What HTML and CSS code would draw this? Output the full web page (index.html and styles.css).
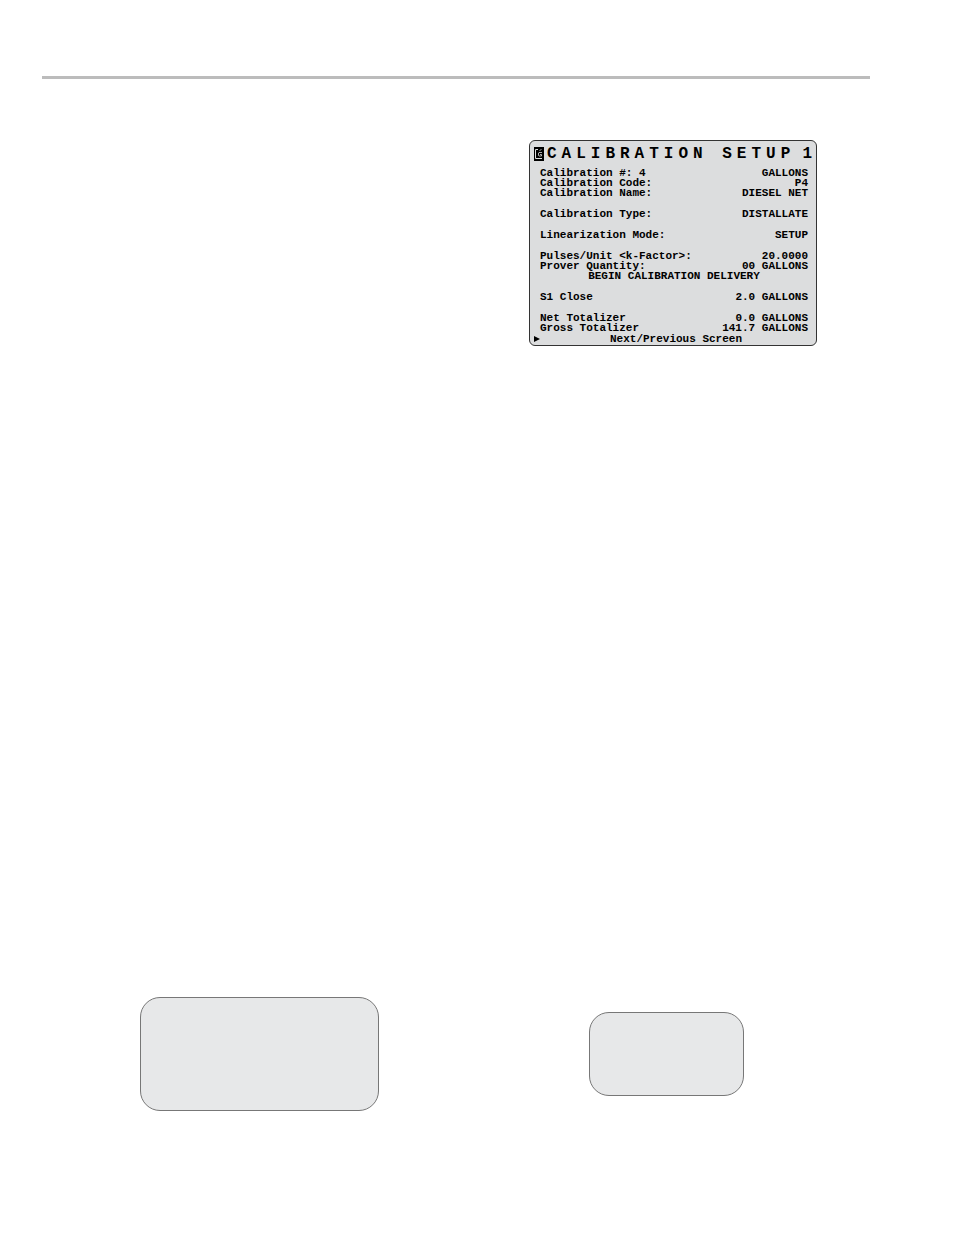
FILE: index.html
```html
<!DOCTYPE html>
<html lang="en">
<head>
    <meta charset="UTF-8">
    <meta name="viewport" content="width=device-width, initial-scale=1.0">
    <title>Calibration Setup</title>
    <link rel="stylesheet" href="styles.css">
</head>
<body>

    <header class="page-header"></header>

    <main class="page-content">
        <section class="screen">
            <div class="screen-header">
                <svg class="screen-icon" width="10" height="14" viewBox="0 0 10 14" aria-hidden="true">
                    <rect width="10" height="14" fill="#000"/>
                    <path d="M4 2.5H1.5V11.5H8" fill="none" stroke="#ddd" stroke-width="1"/>
                    <path d="M8 5.5H5L4.5 6V8.5L5 9H7.5V7.5H6M5.5 4L7.5 2" fill="none" stroke="#ddd" stroke-width="0.8"/>
                </svg>
                <h1 class="screen-title">CALIBRATION SETUP</h1>
                <span class="screen-number">1</span>
            </div>

            <div class="screen-body">
                <dl>
                    <div class="row"><dt>Calibration #: 4</dt><dd>GALLONS</dd></div>
                    <div class="row"><dt>Calibration Code:</dt><dd>P4</dd></div>
                    <div class="row"><dt>Calibration Name:</dt><dd>DIESEL NET</dd></div>
                </dl>
                <dl>
                    <div class="row"><dt>Calibration Type:</dt><dd>DISTALLATE</dd></div>
                </dl>
                <dl>
                    <div class="row"><dt>Linearization Mode:</dt><dd>SETUP</dd></div>
                </dl>
                <div>
                    <dl>
                        <div class="row"><dt>Pulses/Unit &lt;k-Factor&gt;:</dt><dd>20.0000</dd></div>
                        <div class="row"><dt>Prover Quantity:</dt><dd>00 GALLONS</dd></div>
                    </dl>
                    <p class="center-line">BEGIN CALIBRATION DELIVERY</p>
                </div>
                <dl>
                    <div class="row"><dt>S1 Close</dt><dd>2.0 GALLONS</dd></div>
                </dl>
                <dl>
                    <div class="row"><dt>Net Totalizer</dt><dd>0.0 GALLONS</dd></div>
                    <div class="row"><dt>Gross Totalizer</dt><dd>141.7 GALLONS</dd></div>
                </dl>
            </div>

            <div class="screen-footer">
                <svg class="arrow" width="6" height="6" viewBox="0 0 6 6" aria-hidden="true">
                    <path d="M0 0L6 3L0 6Z"/>
                </svg>
                <p class="footer-text">Next/Previous Screen</p>
            </div>
        </section>

        <section class="panels">
            <div class="panel panel-large"></div>
            <div class="panel panel-small"></div>
        </section>
    </main>

</body>
</html>
```
FILE: styles.css
```css
* {
    box-sizing: border-box;
}

body {
    margin: 0;
    padding: 76px 84px 80px 42px;
    background-color: #fff;
    color: #000;
    font-family: "Liberation Mono", "Courier New", monospace;
}

h1, p, dl, dd {
    margin: 0;
}

.page-header {
    height: 3px;
    background-color: #bcbcbc;
}

.page-content {
    display: flex;
    flex-direction: column;
    padding: 61px 0 0 14px;
}

/* Display screen */
.screen {
    align-self: flex-end;
    width: 288px;
    margin-right: 53px;
    padding: 5px 4px 0;
    background-color: #dcddde;
    border: 1px solid #333;
    border-radius: 6px;
    font-size: 11px;
    font-weight: bold;
    line-height: 10px;
}

.screen-header {
    display: flex;
    align-items: center;
    height: 16px;
}

.screen-icon {
    margin-right: 3px;
}

.screen-title,
.screen-number {
    font-size: 16px;
    font-weight: bold;
    line-height: 16px;
    white-space: nowrap;
}

.screen-title {
    letter-spacing: 5px;
}

.screen-number {
    margin-left: auto;
}

.screen-body {
    display: flex;
    flex-direction: column;
    gap: 11px;
    padding: 6px 4px 0 6px;
}

.row {
    display: flex;
    justify-content: space-between;
}

.center-line,
.footer-text {
    text-align: center;
}

.screen-footer {
    display: flex;
    align-items: center;
    height: 12px;
}

.footer-text {
    flex: 1;
}

/* Empty panels at the bottom of the page */
.panels {
    display: grid;
    grid-template-columns: 1fr 1fr;
    align-items: center;
    justify-items: center;
    margin-top: 651px;
}

.panel {
    background-color: #e7e8e9;
    border: 1px solid #777;
    border-radius: 20px;
}

.panel-large {
    width: 239px;
    height: 114px;
}

.panel-small {
    width: 155px;
    height: 84px;
}
```
